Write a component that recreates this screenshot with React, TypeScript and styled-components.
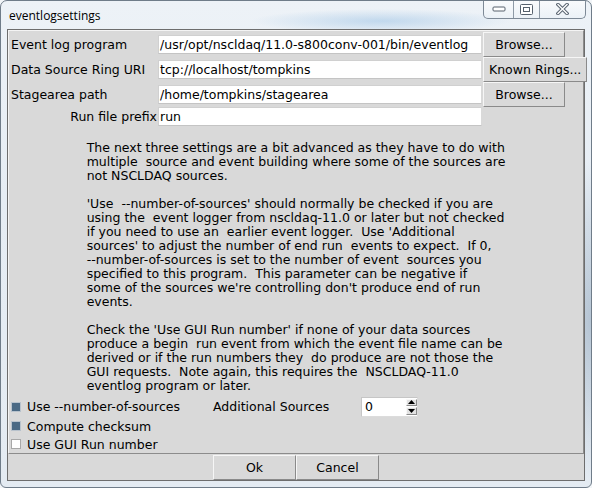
import styled, { createGlobalStyle } from 'styled-components';

const GlobalStyle = createGlobalStyle`
  html, body {
    margin: 0;
    padding: 0;
    background: #f2f5f8;
  }
  * {
    box-sizing: border-box;
  }
`;

const Window = styled.div`
  width: 592px;
  height: 488px;
  display: flex;
  flex-direction: column;
  border: 1px solid #6f7c89;
  border-radius: 7px 7px 6px 6px;
  background:
    radial-gradient(ellipse 130px 12px at 380px 20px, rgba(140, 185, 225, 0.45), transparent),
    radial-gradient(ellipse 40px 160px at 590px 320px, rgba(90, 120, 150, 0.35), transparent),
    linear-gradient(180deg, #edf2f7 0%, #e6edf4 40%, #e4ebf2 100%);
  overflow: hidden;
`;

const TitleBar = styled.div`
  height: 28px;
  display: flex;
  justify-content: space-between;
  align-items: flex-start;
  padding-left: 8px;
  padding-right: 5px;
`;

const Title = styled.span`
  margin-top: 6px;
  font-family: 'Open Sans', 'Noto Sans', sans-serif;
  font-size: 12px;
  color: #000;
`;

const Controls = styled.div`
  display: flex;
  height: 19px;
  margin-top: -1px;
  border: 1px solid #7d8996;
  border-top: none;
  border-radius: 0 0 5px 5px;
  background: linear-gradient(180deg, rgba(255, 255, 255, 0.7), rgba(235, 241, 247, 0.6));
  overflow: hidden;
`;

const ControlButton = styled.div<{ $w: number }>`
  width: ${({ $w }) => $w}px;
  display: flex;
  align-items: center;
  justify-content: center;
  border-left: 1px solid #8e9aa6;

  &:first-child {
    border-left: none;
  }
`;

const Client = styled.div`
  flex: 1;
  margin: 0 6px 6px 6px;
  display: flex;
  flex-direction: column;
  background: #d9d9d9;
  border: 1px solid #6d6d6d;
`;

const UpperFrame = styled.div`
  flex: 1;
  display: flex;
  flex-direction: column;
  border: 1px solid;
  border-color: #f4f4f4 #8c8c8c #8c8c8c #f4f4f4;
  font-family: 'DejaVu Sans', sans-serif;
  font-size: 12.5px;
  color: #000;
`;

const SettingsGrid = styled.div`
  display: grid;
  grid-template-columns: 148px 324px auto;
  grid-template-rows: 25px 25px 25px 18px;
  column-gap: 1px;
  padding-top: 1px;
`;

const FieldLabel = styled.div<{ $right?: boolean }>`
  display: flex;
  align-items: center;
  justify-content: ${({ $right }) => ($right ? 'flex-end' : 'flex-start')};
  padding-left: 2px;
  white-space: nowrap;
`;

const Entry = styled.div`
  align-self: center;
  height: 19px;
  display: flex;
  align-items: center;
  padding-left: 1px;
  background: #fff;
  border: 1px solid;
  border-color: #d0d0d0 #d9d9d9 #c4c4c4 #d0d0d0;
  white-space: nowrap;
  overflow: hidden;
`;

const Button = styled.div<{ $min?: number }>`
  min-width: ${({ $min }) => $min ?? 82}px;
  height: 25px;
  padding: 0 5px;
  display: flex;
  align-items: center;
  justify-content: center;
  background: #d9d9d9;
  border: 1px solid;
  border-color: #f6f6f6 #8a8a8a #8a8a8a #f6f6f6;
  font-family: 'DejaVu Sans', sans-serif;
  font-size: 12.5px;
  white-space: nowrap;
`;

const ButtonCell = styled.div`
  display: flex;
  align-items: flex-start;
`;

const Help = styled.div`
  align-self: center;
  margin-top: 16px;
  white-space: pre;
  line-height: 14px;
`;

const Options = styled.div`
  margin-top: 3px;
  display: flex;
  flex-direction: column;
  padding-left: 2px;
`;

const OptionRow = styled.div<{ $h: number }>`
  height: ${({ $h }) => $h}px;
  display: flex;
  align-items: center;
`;

const Check = styled.div`
  width: 202px;
  display: flex;
  align-items: center;
  gap: 6px;
  white-space: nowrap;
`;

const Indicator = styled.span<{ $on?: boolean }>`
  width: 10px;
  height: 10px;
  background: ${({ $on }) => ($on ? '#4a6984' : '#fff')};
  border: 1px solid ${({ $on }) => ($on ? '#b8c2cc' : '#a8a8a8')};
`;

const SpinLabel = styled.div`
  width: 148px;
`;

const Spinbox = styled.div`
  width: 57px;
  height: 20px;
  display: flex;
  background: #fff;
  border: 1px solid;
  border-color: #c6c6c6 #dcdcdc #dcdcdc #c6c6c6;
`;

const SpinValue = styled.div`
  flex: 1;
  display: flex;
  align-items: center;
  padding-left: 3px;
`;

const SpinArrows = styled.div`
  width: 11px;
  display: flex;
  flex-direction: column;
  gap: 1px;
  padding: 1px 0;
`;

const Arrow = styled.div`
  flex: 1;
  display: flex;
  align-items: center;
  justify-content: center;
  background: #e2e2e2;
  border: 1px solid;
  border-color: #f8f8f8 #8a8a8a #8a8a8a #f8f8f8;
`;

const BottomBar = styled.div`
  height: 26px;
  display: flex;
  justify-content: center;
  align-items: center;
`;

const helpText = `The next three settings are a bit advanced as they have to do with
multiple  source and event building where some of the sources are
not NSCLDAQ sources.

'Use  --number-of-sources' should normally be checked if you are
using the  event logger from nscldaq-11.0 or later but not checked
if you need to use an  earlier event logger.  Use 'Additional
sources' to adjust the number of end run  events to expect.  If 0,
--number-of-sources is set to the number of event  sources you
specified to this program.  This parameter can be negative if
some of the sources we're controlling don't produce end of run
events.

Check the 'Use GUI Run number' if none of your data sources
produce a begin  run event from which the event file name can be
derived or if the run numbers they  do produce are not those the
GUI requests.  Note again, this requires the  NSCLDAQ-11.0
eventlog program or later.`;

function MinimizeIcon() {
  return (
    <svg width="14" height="6" viewBox="0 0 14 6">
      <rect x="1" y="1" width="12" height="4" rx="1" fill="#fff" stroke="#56616d" />
    </svg>
  );
}

function MaximizeIcon() {
  return (
    <svg width="13" height="11" viewBox="0 0 13 11">
      <rect x="0.5" y="0.5" width="12" height="10" rx="1" fill="#fff" stroke="#56616d" />
      <rect x="3.5" y="3.5" width="6" height="4" fill="none" stroke="#56616d" />
    </svg>
  );
}

function CloseIcon() {
  return (
    <svg width="13" height="12" viewBox="0 0 13 12">
      <path d="M2 1.5 L11 10.5 M11 1.5 L2 10.5" stroke="#5a6571" strokeWidth="3.4" strokeLinecap="square" />
      <path d="M2 1.5 L11 10.5 M11 1.5 L2 10.5" stroke="#fff" strokeWidth="1.4" strokeLinecap="square" />
    </svg>
  );
}

function ArrowGlyph({ up }: { up?: boolean }) {
  return (
    <svg width="7" height="4" viewBox="0 0 7 4">
      <path d={up ? 'M0 4 L3.5 0 L7 4 Z' : 'M0 0 L3.5 4 L7 0 Z'} fill="#000" />
    </svg>
  );
}

function App() {
  return (
    <>
      <GlobalStyle />
      <Window>
        <TitleBar>
          <Title>eventlogsettings</Title>
          <Controls>
            <ControlButton $w={29}>
              <MinimizeIcon />
            </ControlButton>
            <ControlButton $w={26}>
              <MaximizeIcon />
            </ControlButton>
            <ControlButton $w={46}>
              <CloseIcon />
            </ControlButton>
          </Controls>
        </TitleBar>
        <Client>
          <UpperFrame>
            <SettingsGrid>
              <FieldLabel>Event log program</FieldLabel>
              <Entry>/usr/opt/nscldaq/11.0-s800conv-001/bin/eventlog</Entry>
              <ButtonCell>
                <Button>Browse...</Button>
              </ButtonCell>

              <FieldLabel>Data Source Ring URI</FieldLabel>
              <Entry>tcp://localhost/tompkins</Entry>
              <ButtonCell>
                <Button>Known Rings...</Button>
              </ButtonCell>

              <FieldLabel>Stagearea path</FieldLabel>
              <Entry>/home/tompkins/stagearea</Entry>
              <ButtonCell>
                <Button>Browse...</Button>
              </ButtonCell>

              <FieldLabel $right>Run file prefix</FieldLabel>
              <Entry>run</Entry>
              <div />
            </SettingsGrid>

            <Help>{helpText}</Help>

            <Options>
              <OptionRow $h={21}>
                <Check>
                  <Indicator $on />
                  Use --number-of-sources
                </Check>
                <SpinLabel>Additional Sources</SpinLabel>
                <Spinbox>
                  <SpinValue>0</SpinValue>
                  <SpinArrows>
                    <Arrow>
                      <ArrowGlyph up />
                    </Arrow>
                    <Arrow>
                      <ArrowGlyph />
                    </Arrow>
                  </SpinArrows>
                </Spinbox>
              </OptionRow>
              <OptionRow $h={18}>
                <Check>
                  <Indicator $on />
                  Compute checksum
                </Check>
              </OptionRow>
              <OptionRow $h={18}>
                <Check>
                  <Indicator />
                  Use GUI Run number
                </Check>
              </OptionRow>
            </Options>
          </UpperFrame>
          <BottomBar>
            <Button $min={83}>Ok</Button>
            <Button $min={83}>Cancel</Button>
          </BottomBar>
        </Client>
      </Window>
    </>
  );
}

export default App;
